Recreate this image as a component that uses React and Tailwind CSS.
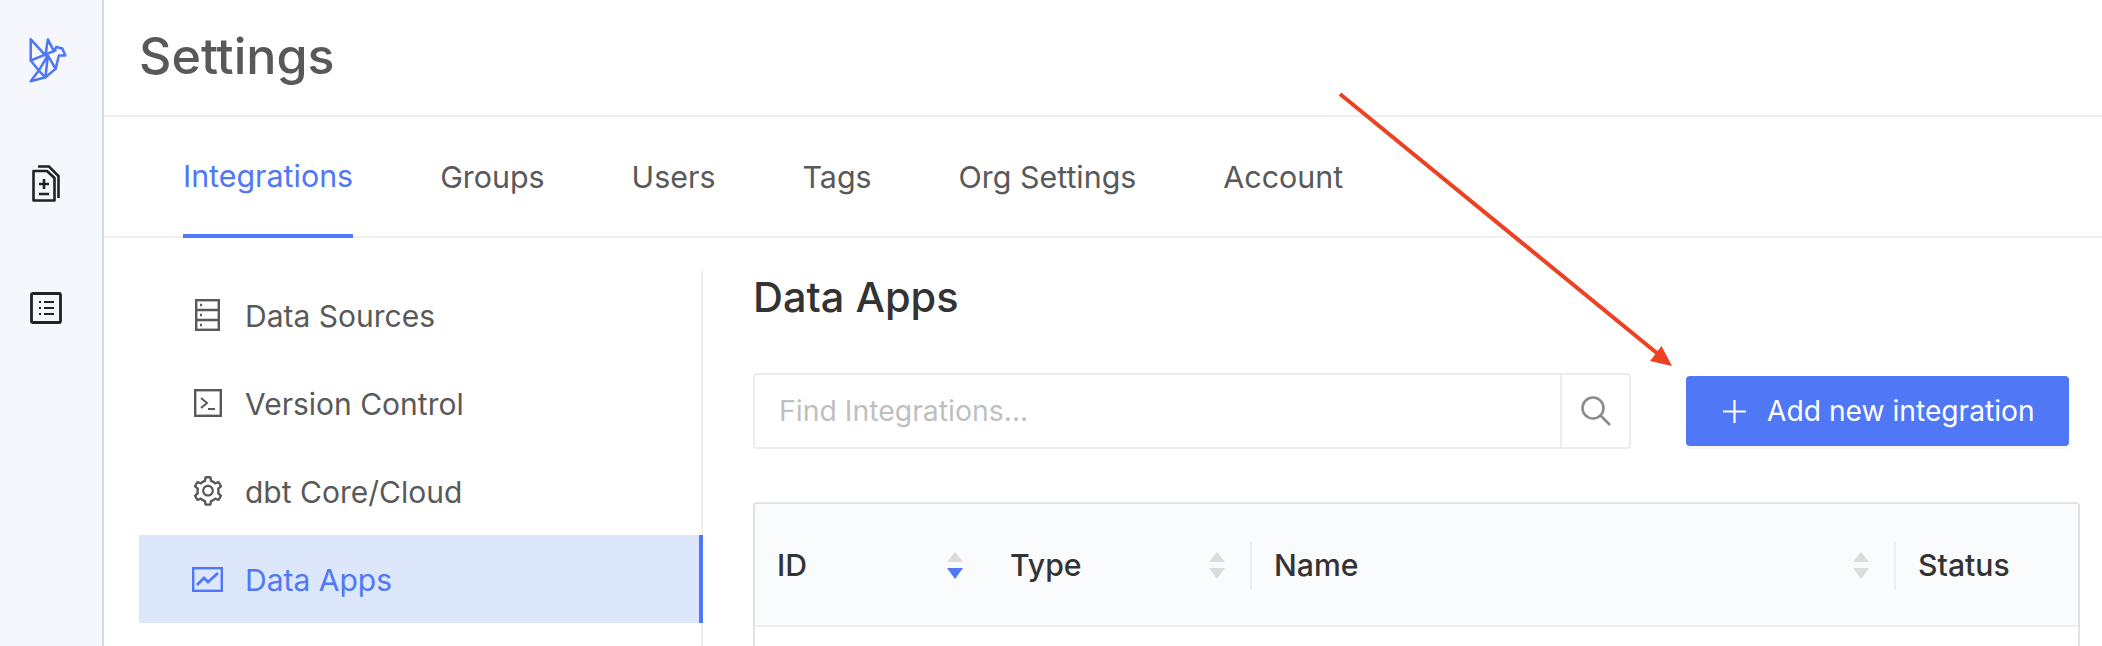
import { AiOutlineSetting } from 'react-icons/ai';

const tabs = ['Integrations', 'Groups', 'Users', 'Tags', 'Org Settings', 'Account'];

function BirdLogo() {
  return (
    <svg width="40" height="46" viewBox="85 50 115 137" fill="none" stroke="#4f77f6" strokeWidth="7.5" strokeLinejoin="round" strokeLinecap="round">
      <path d="M91 57 L91 120 L115 150 L91 182 L135 170 L165 145 L175 105 L194 105 L185 84 L167 80 L160 92 L142 57 L135 105 L91 57" />
      <path d="M91 120 L165 90" />
      <path d="M142 105 L135 170 L115 150 L142 105 L165 145" />
    </svg>
  );
}

function FilesIcon() {
  return (
    <svg width="28" height="37" viewBox="0 0 28 37" fill="none" stroke="#222" strokeWidth="2.6">
      <path d="M1.5 6 H15 L22.5 13 V35.5 H1.5 Z" strokeLinejoin="round" />
      <path d="M6 1.5 H17 L26.5 11 V33" />
      <path d="M12 14 V24 M7 19 H17 M7 29 H17" />
    </svg>
  );
}

function ListIcon() {
  return (
    <svg width="32" height="32" viewBox="0 0 32 32" fill="none" stroke="#222" strokeWidth="2.8">
      <rect x="1.5" y="1.5" width="29" height="29" rx="1.5" />
      <path d="M14 10 H24 M14 16 H24 M14 22 H24" strokeWidth="2.2" />
      <path d="M9 10 H11 M9 16 H11 M9 22 H11" strokeWidth="2.2" />
    </svg>
  );
}

function ServerIcon() {
  return (
    <svg width="25" height="32" viewBox="0 0 25 32" fill="none" stroke="#595959" strokeWidth="2.4">
      <rect x="1.2" y="1.2" width="22.6" height="29.6" />
      <path d="M1 11 H24 M1 21 H24" />
      <path d="M5 6 H7 M5 16 H7 M5 26 H7" />
    </svg>
  );
}

function TerminalIcon() {
  return (
    <svg width="28" height="28" viewBox="0 0 28 28" fill="none" stroke="#595959" strokeWidth="2.4">
      <rect x="1.2" y="1.2" width="25.6" height="25.6" />
      <path d="M7 9 L13 14 L7 19 M14 20 H21" strokeWidth="2" />
    </svg>
  );
}

function ChartIcon() {
  return (
    <svg width="31" height="25" viewBox="0 0 31 25" fill="none" stroke="#4f77f6" strokeWidth="2.4">
      <rect x="1.2" y="1.2" width="28.6" height="22.6" />
      <path d="M5 18 L12 11 L16 15 L26 6" strokeWidth="2.8" />
    </svg>
  );
}

function SearchIcon() {
  return (
    <svg width="30" height="30" viewBox="0 0 30 30" fill="none" stroke="#8c8c8c" strokeWidth="2.6">
      <circle cx="12" cy="12" r="10.5" />
      <path d="M19.5 19.5 L29 29" />
    </svg>
  );
}

function PlusIcon() {
  return (
    <svg width="23" height="23" viewBox="0 0 23 23" fill="none" stroke="#fff" strokeWidth="2.2">
      <path d="M11.5 0 V23 M0 11.5 H23" />
    </svg>
  );
}

function SortArrows({ active }) {
  return (
    <div className="flex flex-col gap-[6px]">
      <div className="w-0 h-0 border-x-[8.5px] border-x-transparent border-b-[10px] border-b-[#dcdcdc]" />
      <div className={active
        ? 'w-0 h-0 border-x-[8.5px] border-x-transparent border-t-[11px] border-t-[#4f77f6]'
        : 'w-0 h-0 border-x-[8.5px] border-x-transparent border-t-[11px] border-t-[#dcdcdc]'} />
    </div>
  );
}

function NavItem({ icon, label, active }) {
  return (
    <div className={active
      ? 'h-[88px] -mr-[2px] flex items-center bg-[#dce7fb] text-[#4f77f6] border-r-4 border-[#4f77f6]'
      : 'h-[88px] flex items-center text-[#595959]'}>
      <div className="w-[106px] pl-[50px] pr-[19px] flex justify-center shrink-0">{icon}</div>
      <span className="pt-[2px]">{label}</span>
    </div>
  );
}

export default function App() {
  return (
    <div className="relative h-[646px] w-[2102px] overflow-hidden flex bg-white font-['Inter',sans-serif]">
      <aside className="w-[104px] shrink-0 bg-[#f5f7fc] border-r-2 border-[#cfdcec] flex flex-col items-center pr-[10px]">
        <div className="mt-[37px] ml-[4px]"><BirdLogo /></div>
        <div className="mt-[82px]"><FilesIcon /></div>
        <div className="mt-[90px]"><ListIcon /></div>
      </aside>

      <main className="flex-1 min-w-0">
        <header className="h-[117px] border-b-2 border-[#f0f0f0] pl-[35px] flex items-center pb-[2px]">
          <h1 className="text-[50.2px] leading-none font-medium text-[#595959]">Settings</h1>
        </header>

        <nav className="h-[121px] border-b-2 border-[#f0f0f0] pl-[79px] flex gap-[87px]">
          {tabs.map((t, i) => (
            <div
              key={t}
              className={i === 0
                ? 'h-[121px] flex items-center text-[30.4px] text-[#4f77f6] border-b-4 border-[#4f77f6] pt-[2px]'
                : 'h-[121px] flex items-center text-[30.4px] text-[#595959]'}
            >
              {t}
            </div>
          ))}
        </nav>

        <div className="flex pl-[35px]">
          <div className="w-[564px] shrink-0 mt-[33px] border-r-2 border-[#f0f0f0] text-[30px]">
            <NavItem icon={<ServerIcon />} label="Data Sources" />
            <NavItem icon={<TerminalIcon />} label="Version Control" />
            <NavItem icon={<AiOutlineSetting size={34} color="#595959" />} label="dbt Core/Cloud" />
            <NavItem icon={<ChartIcon />} label="Data Apps" active />
          </div>

          <div className="ml-[50px] w-[1327px] shrink-0">
            <h2 className="mt-[34px] h-[50px] flex items-center text-[41.5px] font-medium text-[#333333]">Data Apps</h2>

            <div className="mt-[51px] flex items-center">
              <div className="w-[878px] h-[76px] flex border-2 border-[#ececec] rounded-[4px]">
                <div className="flex-1 pl-[24px] flex items-center text-[28.4px] text-[#bfbfbf]">Find Integrations...</div>
                <div className="w-[69px] border-l-2 border-[#ececec] flex items-center justify-center">
                  <SearchIcon />
                </div>
              </div>
              <button className="ml-[55px] w-[383px] h-[70px] bg-[#4f77f6] rounded-[4px] flex items-center pl-[37px] text-white text-[28.2px] shadow-[0_3px_0_rgba(0,0,0,0.03)]">
                <PlusIcon />
                <span className="ml-[21px]">Add new integration</span>
              </button>
            </div>

            <div className="mt-[53px] h-[200px] border-2 border-[#e2e2e2] rounded-t-[4px]">
              <div className="h-[123px] pt-[2px] bg-[#fafbfd] border-b-2 border-[#eeeeee] flex items-center text-[30.2px] font-medium text-[#333333]">
                <div className="w-[231px] shrink-0 pl-[22px] pr-[23px] flex items-center justify-between">
                  <span>ID</span>
                  <SortArrows active />
                </div>
                <div className="w-[266px] shrink-0 pl-[24px] pr-[25px] flex items-center justify-between border-r-2 border-[#eeeeee] h-[48px]">
                  <span>Type</span>
                  <SortArrows />
                </div>
                <div className="w-[644px] shrink-0 pl-[22px] pr-[25px] flex items-center justify-between border-r-2 border-[#eeeeee] h-[48px]">
                  <span>Name</span>
                  <SortArrows />
                </div>
                <div className="pl-[22px]">Status</div>
              </div>
            </div>
          </div>
        </div>
      </main>

      <svg className="absolute left-0 top-0 pointer-events-none" width="2102" height="646" fill="none">
        <path d="M1340 94 L1658 354" stroke="#ee4023" strokeWidth="4" />
        <path d="M1672 366 L1650 361 L1661.5 346 Z" fill="#ee4023" />
      </svg>
    </div>
  );
}
